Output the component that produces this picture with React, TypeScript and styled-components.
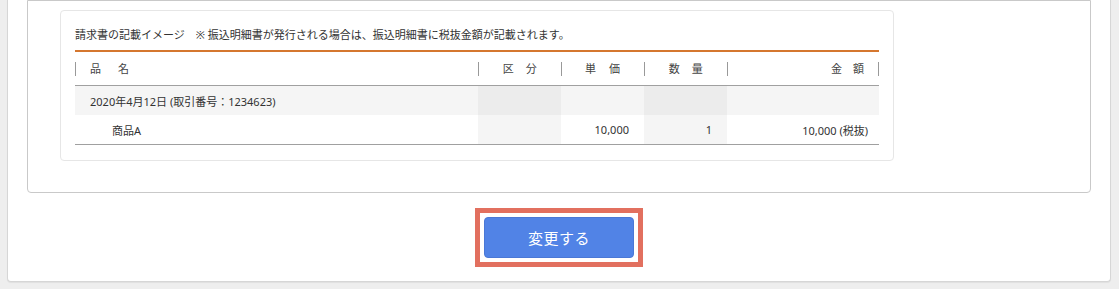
import React from "react";
import styled, { createGlobalStyle } from "styled-components";

const FONT = `"Noto Sans", "Noto Sans CJK JP", sans-serif`;

const GlobalStyle = createGlobalStyle`
  html, body {
    margin: 0;
    padding: 0;
    background: #eeeeee;
    font-family: ${FONT};
    color: #333;
  }
`;

const Page = styled.div`
  padding: 0 8px 8px 7px;
`;

const OuterCard = styled.div`
  background: #fff;
  border: 1px solid #d6d6d6;
  border-top: none;
  border-radius: 0 0 4px 4px;
  box-shadow: 0 1px 1px rgba(0, 0, 0, 0.06);
  padding: 0 19px 14px;
`;

const Section = styled.div`
  border: 1px solid #c9c9c9;
  border-radius: 0 0 4px 4px;
  padding: 9px 32px 31px;
`;

const InvoiceCard = styled.div`
  width: 834px;
  box-sizing: border-box;
  border: 1px solid #e6e6e6;
  border-radius: 4px;
  padding: 0 14px 15px;
`;

const Title = styled.div`
  font-size: 11px;
  line-height: 16px;
  padding: 16px 0 7px;
  border-bottom: 2px solid #d5772f;
  color: #333;
  white-space: nowrap;
`;

const COLS = "403px 83px 83px 83px 152px";

const HeaderRow = styled.div`
  display: grid;
  grid-template-columns: ${COLS};
  padding: 10px 0 9px;
  border-bottom: 1px solid #a0a0a0;
`;

const HeaderCell = styled.div<{ $align: "left" | "center" | "right"; $last?: boolean; $spacing?: number }>`
  height: 14px;
  line-height: 14px;
  font-size: 11px;
  color: #444;
  border-left: 1px solid #999;
  ${(p) => (p.$last ? "border-right: 1px solid #999;" : "")}
  text-align: ${(p) => p.$align};
  padding: ${(p) => (p.$align === "left" ? "0 0 0 14px" : p.$align === "right" ? "0 14px 0 0" : "0")};
  letter-spacing: ${(p) => p.$spacing ?? 0}px;
  white-space: nowrap;
`;

const BodyRow = styled.div<{ $shade: boolean; $lastRow?: boolean }>`
  display: grid;
  grid-template-columns: ${COLS};
  height: 29px;
  background: ${(p) => (p.$shade ? "#f5f5f5" : "#ffffff")};
  ${(p) => (p.$lastRow ? "border-bottom: 1px solid #a0a0a0;" : "")}
`;

const BodyCell = styled.div<{ $align: "left" | "right"; $indent?: number; $tint?: string }>`
  display: flex;
  align-items: center;
  justify-content: ${(p) => (p.$align === "left" ? "flex-start" : "flex-end")};
  font-size: 11px;
  color: #333;
  background: ${(p) => p.$tint ?? "transparent"};
  padding: ${(p) =>
    p.$align === "left" ? `0 0 0 ${p.$indent ?? 15}px` : `0 ${p.$indent ?? 15}px 0 0`};
  white-space: nowrap;
`;

const ButtonRow = styled.div`
  display: flex;
  justify-content: center;
  padding-top: 15px;
`;

const Highlight = styled.div`
  border: 5px solid #e2705f;
  padding: 4px;
  background: #fff;
`;

const PrimaryButton = styled.button`
  width: 150px;
  height: 41px;
  box-sizing: border-box;
  background: #5183e6;
  border: 1px solid #4a78d6;
  border-radius: 4px;
  color: #fff;
  font-family: ${FONT};
  font-size: 15px;
  letter-spacing: 0.5px;
  cursor: pointer;
  display: block;
  padding: 0;
`;

const rows = [
  {
    shade: true,
    cells: ["2020年4月12日 (取引番号：1234623)", "", "", "", ""],
    indent: 15,
    tints: ["", "#ececec", "", "#ececec", ""],
  },
  {
    shade: false,
    cells: ["商品A", "", "10,000", "1", "10,000 (税抜)"],
    indent: 37,
    tints: ["", "#f5f5f5", "", "#f5f5f5", ""],
  },
];

export default function App() {
  return (
    <>
      <GlobalStyle />
      <Page>
        <OuterCard>
          <Section>
            <InvoiceCard>
              <Title>
                請求書の記載イメージ　※ 振込明細書が発行される場合は、振込明細書に税抜金額が記載されます。
              </Title>
              <HeaderRow>
                <HeaderCell $align="left" $spacing={3}>品　名</HeaderCell>
                <HeaderCell $align="center" $spacing={0.5}>区　分</HeaderCell>
                <HeaderCell $align="center" $spacing={1}>単　価</HeaderCell>
                <HeaderCell $align="center" $spacing={0.5}>数　量</HeaderCell>
                <HeaderCell $align="right" $last>金　額</HeaderCell>
              </HeaderRow>
              {rows.map((r, i) => (
                <BodyRow key={i} $shade={r.shade} $lastRow={i === rows.length - 1}>
                  {r.cells.map((c, j) => (
                    <BodyCell
                      key={j}
                      $align={j === 0 ? "left" : "right"}
                      $indent={j === 0 ? r.indent : j === 4 ? 11 : 15}
                      $tint={r.tints[j] || undefined}
                    >
                      {c}
                    </BodyCell>
                  ))}
                </BodyRow>
              ))}
            </InvoiceCard>
          </Section>
          <ButtonRow>
            <Highlight>
              <PrimaryButton>変更する</PrimaryButton>
            </Highlight>
          </ButtonRow>
        </OuterCard>
      </Page>
    </>
  );
}
